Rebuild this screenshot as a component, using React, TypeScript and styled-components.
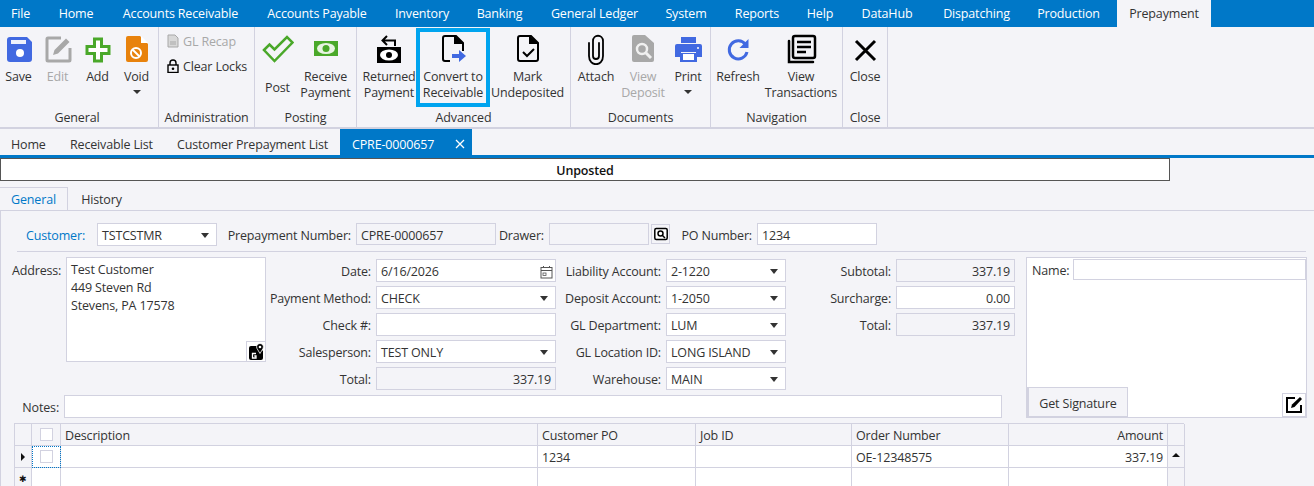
import * as React from "react";
import styled, { createGlobalStyle } from "styled-components";

const line = "#d2d2e0";
const panel = "#f4f4f8";
const ink = "#333";
const blue = "#0078c8";
const royal = "#4169e1";
const green = "#4aa82a";
const grey = "#a8a8a8";

const Global = createGlobalStyle`
  html, body { margin: 0; padding: 0; background: ${panel}; }
  body {
    width: 1314px;
    height: 486px;
    overflow: hidden;
    font-family: "Open Sans", "Noto Sans", sans-serif;
    font-size: 12.5px;
    letter-spacing: -0.16px;
    color: ${ink};
  }
`;

/* top menu */
const MenuBar = styled.div`
  display: flex;
  height: 27px;
  background: ${blue};
`;

const MenuItem = styled.div<{ $w: number; $active?: boolean }>`
  width: ${p => p.$w}px;
  margin-left: ${p => (p.$active ? 7 : 0)}px;
  line-height: 27px;
  text-align: center;
  white-space: nowrap;
  color: ${p => (p.$active ? ink : "#fff")};
  background: ${p => (p.$active ? panel : "transparent")};
`;

/* ribbon */
const Ribbon = styled.div`
  display: flex;
  height: 102px;
  box-sizing: border-box;
  border-bottom: 2px solid ${line};
`;

const Group = styled.div<{ $w: number }>`
  display: flex;
  flex-direction: column;
  width: ${p => p.$w}px;
  box-sizing: border-box;
  border-right: 1px solid ${line};
`;

const GroupBody = styled.div<{ $pad?: number }>`
  display: flex;
  height: 81px;
  padding-left: ${p => p.$pad ?? 0}px;
`;

const GroupLabel = styled.div<{ $shift?: number }>`
  height: 19px;
  padding-right: ${p => p.$shift ?? 0}px;
  line-height: 20px;
  text-align: center;
  white-space: nowrap;
`;

const RibbonButton = styled.div<{ $w: number; $off?: boolean; $boxed?: boolean }>`
  display: flex;
  flex-direction: column;
  align-items: center;
  flex: none;
  width: ${p => p.$w}px;
  box-sizing: border-box;
  height: ${p => (p.$boxed ? 79 : 81)}px;
  padding-top: ${p => (p.$boxed ? 5 : 6)}px;
  margin-top: ${p => (p.$boxed ? 1 : 0)}px;
  color: ${p => (p.$off ? grey : ink)};
  box-shadow: ${p => (p.$boxed ? "inset 0 0 0 4px #00a4ef" : "none")};
`;

const IconBox = styled.svg`
  display: block;
  flex: none;
  width: 32px;
  height: 32px;
`;

const ButtonText = styled.div<{ $low?: boolean }>`
  margin-top: ${p => (p.$low ? 15 : 4)}px;
  line-height: 16px;
  text-align: center;
  white-space: nowrap;
`;

const DropCaret = styled.div`
  width: 0;
  height: 0;
  margin-top: 5px;
  border-left: 4px solid transparent;
  border-right: 4px solid transparent;
  border-top: 4px solid ${ink};
`;

const SmallStack = styled.div`
  display: flex;
  flex-direction: column;
  gap: 7px;
  padding-top: 5px;
`;

const SmallButton = styled.div<{ $off?: boolean }>`
  display: flex;
  align-items: center;
  gap: 4px;
  height: 18px;
  white-space: nowrap;
  color: ${p => (p.$off ? grey : ink)};
`;

/* document tabs */
const DocTabs = styled.div`
  display: flex;
  height: 26px;
  background-color: ${panel};
  background-image: radial-gradient(#e6e6ec 0.6px, transparent 0.6px);
  background-size: 4px 4px;
`;

const DocTab = styled.div<{ $w: number; $pad: number; $active?: boolean }>`
  display: flex;
  align-items: center;
  justify-content: space-between;
  width: ${p => p.$w}px;
  box-sizing: border-box;
  padding: 4px 7px 0 ${p => p.$pad}px;
  white-space: nowrap;
  color: ${p => (p.$active ? "#fff" : ink)};
  background: ${p => (p.$active ? blue : "transparent")};
`;

const BlueRule = styled.div`
  height: 3px;
  background: ${blue};
`;

const StatusBar = styled.div`
  width: 1170px;
  height: 23px;
  box-sizing: border-box;
  border: 1px solid #555;
  background: #fff;
  color: #111;
  font-weight: 600;
  line-height: 23px;
  text-align: center;
`;

/* General / History */
const TabStrip = styled.div`
  display: flex;
  height: 24px;
  margin-top: 6px;
  box-sizing: border-box;
  border-bottom: 1px solid ${line};
`;

const FormTab = styled.div<{ $active?: boolean }>`
  width: 68px;
  height: 24px;
  box-sizing: border-box;
  line-height: 23px;
  text-align: center;
  color: ${p => (p.$active ? blue : ink)};
  border: 1px solid ${p => (p.$active ? line : "transparent")};
  border-bottom: 0;
  border-left: 0;
`;

const FormBody = styled.div`
  border-left: 1px solid ${line};
  height: 275px;
`;

const TopRow = styled.div`
  display: flex;
  align-items: center;
  height: 22px;
  padding: 12px 0 0 25px;
`;

const Label = styled.div<{ $w?: number; $link?: boolean; $left?: boolean }>`
  flex: none;
  width: ${p => (p.$w ? `${p.$w}px` : "auto")};
  box-sizing: border-box;
  padding: 2px 5px 0 0;
  text-align: ${p => (p.$left ? "left" : "right")};
  white-space: nowrap;
  color: ${p => (p.$link ? blue : ink)};
`;

const Input = styled.div<{ $w: number; $h?: number; $read?: boolean; $right?: boolean }>`
  display: flex;
  align-items: center;
  justify-content: ${p => (p.$right ? "flex-end" : "space-between")};
  flex: none;
  width: ${p => p.$w}px;
  height: ${p => p.$h ?? 23}px;
  box-sizing: border-box;
  padding: 2px 4px 0;
  border: 1px solid ${line};
  background: ${p => (p.$read ? panel : "#fff")};
  white-space: nowrap;
`;

const Caret = styled.span`
  flex: none;
  width: 0;
  height: 0;
  margin-right: 3px;
  border-left: 4px solid transparent;
  border-right: 4px solid transparent;
  border-top: 5px solid ${ink};
`;

const CalendarIcon = styled.svg`
  flex: none;
  margin-right: -2px;
`;

const LookupButton = styled.div`
  display: flex;
  align-items: center;
  justify-content: center;
  flex: none;
  width: 19px;
  height: 20px;
  margin-left: 2px;
  box-sizing: border-box;
  border: 1px solid ${line};
`;

const Rule = styled.div`
  height: 1px;
  margin: 6px 8px 5px 16px;
  background: ${line};
`;

const Section = styled.div`
  display: flex;
  height: 161px;
`;

const LeftStack = styled.div`
  display: flex;
  flex-direction: column;
  width: 1025px;
  flex: none;
`;

const Fields = styled.div`
  display: flex;
  height: 138px;
`;

const AddressBlock = styled.div`
  display: flex;
  width: 265px;
  flex: none;
  padding-left: 11px;
  box-sizing: border-box;
`;

const AddressLabel = styled.div`
  width: 54px;
  padding-top: 5px;
  white-space: nowrap;
`;

const AddressBox = styled.div`
  position: relative;
  width: 200px;
  height: 105px;
  box-sizing: border-box;
  padding: 3px 4px;
  border: 1px solid ${line};
  background: #fff;
  line-height: 18px;
`;

const MapButton = styled.div`
  position: absolute;
  right: 0;
  bottom: 0;
  display: flex;
  align-items: center;
  justify-content: center;
  width: 18px;
  height: 19px;
  border-left: 1px solid ${line};
  border-top: 1px solid ${line};
`;

const Column = styled.div<{ $w: number }>`
  display: flex;
  flex-direction: column;
  gap: 4px;
  flex: none;
  width: ${p => p.$w}px;
  padding-top: 2px;
`;

const FieldRow = styled.div`
  display: flex;
  align-items: center;
  justify-content: flex-end;
  height: 23px;
`;

const NotesRow = styled.div`
  display: flex;
  align-items: center;
  justify-content: flex-end;
  width: 1001px;
  height: 23px;
`;

const SignaturePanel = styled.div`
  display: flex;
  flex-direction: column;
  justify-content: space-between;
  width: 281px;
  height: 161px;
  box-sizing: border-box;
  border: 1px solid ${line};
  background: #fff;
`;

const NameRow = styled.div`
  display: flex;
  align-items: center;
  height: 22px;
  padding-left: 5px;
`;

const SignatureFoot = styled.div`
  display: flex;
  align-items: flex-end;
  justify-content: space-between;
`;

const SignatureButton = styled.div`
  width: 101px;
  height: 30px;
  box-sizing: border-box;
  border: 1px solid ${line};
  border-left-width: 2px;
  background: ${panel};
  line-height: 31px;
  text-align: center;
`;

const PenButton = styled.div`
  display: flex;
  align-items: center;
  justify-content: center;
  width: 24px;
  height: 24px;
  box-sizing: border-box;
  border: 1px solid ${line};
`;

/* lines table */
const Table = styled.div`
  display: grid;
  grid-template-columns: 17px 29px 477px 158px 156px 157px 159px 17px;
  grid-auto-rows: 22px;
  width: 1170px;
  margin: 5px 0 0 13px;
  box-sizing: border-box;
  border-top: 1px solid ${line};
  border-left: 1px solid ${line};
`;

const Cell = styled.div<{ $head?: boolean; $right?: boolean; $focus?: boolean }>`
  display: flex;
  align-items: center;
  justify-content: ${p => (p.$right ? "flex-end" : "flex-start")};
  box-sizing: border-box;
  padding: 2px 4px 0;
  border-right: 1px solid ${line};
  border-bottom: 1px solid ${line};
  background: ${p => (p.$head ? panel : "#fff")};
  white-space: nowrap;
  outline: ${p => (p.$focus ? `1px dotted ${blue}` : "none")};
  outline-offset: -1px;
`;

const CheckCell = styled(Cell)`
  justify-content: center;
  padding: 0;
`;

const MarkerCell = styled(Cell)`
  justify-content: center;
  padding: 0;
  font-size: 9px;
  color: #111;
`;

const Check = styled.span`
  width: 13px;
  height: 13px;
  box-sizing: border-box;
  border: 1px solid ${line};
  background: #fff;
`;

const RowArrow = styled.span`
  width: 0;
  height: 0;
  border-top: 4px solid transparent;
  border-bottom: 4px solid transparent;
  border-left: 4px solid #111;
`;

const ScrollUp = styled.span`
  width: 0;
  height: 0;
  margin-bottom: 4px;
  border-left: 4px solid transparent;
  border-right: 4px solid transparent;
  border-bottom: 4px solid #111;
`;

const docPath = "M8 3h11l7 7v16a2 2 0 0 1-2 2H8a2 2 0 0 1-2-2V5a2 2 0 0 1 2-2z";

const icons: Record<string, React.ReactNode> = {
  save: (
    <>
      <path d="M7 4h17l5 5v17a3 3 0 0 1-3 3H7a3 3 0 0 1-3-3V7a3 3 0 0 1 3-3z" fill={royal} />
      <rect x="8" y="7" width="15" height="4" fill="#eef1fc" />
      <circle cx="17" cy="20" r="4" fill="#fff" />
    </>
  ),
  edit: (
    <>
      <path d="M19 5H6a1 1 0 0 0-1 1v21a1 1 0 0 0 1 1h21a1 1 0 0 0 1-1V15" fill="none" stroke={grey} strokeWidth="3" />
      <path d="M11 22l1.500-5L24 5.500l3.500 3.500L16 20.500z" fill={grey} />
    </>
  ),
  add: (
    <path d="M12.500 6h7v7.500H27v7h-7.500V28h-7v-7.500H5v-7h7.500z" fill="#fff" stroke={green} strokeWidth="3" />
  ),
  void: (
    <>
      <path d="M7 3h12l8 8v16a2 2 0 0 1-2 2H7a2 2 0 0 1-2-2V5a2 2 0 0 1 2-2z" fill="#e8820c" />
      <path d="M20 3l7 7h-7z" fill="#fff" />
      <circle cx="15" cy="20" r="5" fill="none" stroke="#fff" strokeWidth="2" />
      <path d="M11.500 16.500l7 7" stroke="#fff" strokeWidth="2" />
    </>
  ),
  post: (
    <path d="M2 17l5.500-5.500 5 5L25 4l5.500 5.500L12.500 28z" fill={panel} stroke={green} strokeWidth="2.500" />
  ),
  receive: (
    <>
      <rect x="4" y="8" width="24" height="15" fill={green} />
      <ellipse cx="16" cy="15.500" rx="9" ry="5.500" fill="#e8f4e2" />
      <circle cx="16" cy="15.500" r="3.500" fill={green} />
    </>
  ),
  returned: (
    <>
      <rect x="4" y="14" width="24" height="16" fill="#000" />
      <ellipse cx="16" cy="22" rx="9" ry="5.500" fill="#fff" />
      <circle cx="16" cy="22" r="3" fill="#000" />
      <path d="M22 13V7.500H10M14 3L9.500 7.500 14 12" fill="none" stroke="#000" strokeWidth="2" />
    </>
  ),
  convert: (
    <>
      <path d="M13 28H8a2 2 0 0 1-2-2V5a2 2 0 0 1 2-2h11l7 7v8" fill="none" stroke="#000" strokeWidth="2" />
      <path d="M18 3v7h8" fill="#000" stroke="#000" strokeWidth="2" />
      <path d="M15 21h7v-4l7 6-7 6v-4h-7z" fill={royal} />
    </>
  ),
  mark: (
    <>
      <path d={docPath} fill="none" stroke="#000" strokeWidth="2" />
      <path d="M18 3v7h8" fill="#000" stroke="#000" strokeWidth="2" />
      <path d="M11 19l4 4 7-7" fill="none" stroke="#000" strokeWidth="2" />
    </>
  ),
  attach: (
    <path d="M9 10v13c0 11 14 11 14 0V8c0-7-10-7-10 0v15c0 4 6 4 6 0V10" fill="none" stroke="#000" strokeWidth="1.800" strokeLinecap="round" />
  ),
  deposit: (
    <>
      <path d="M7 2h11l9 8v17a2 2 0 0 1-2 2H7a2 2 0 0 1-2-2V4a2 2 0 0 1 2-2z" fill={grey} />
      <circle cx="15" cy="16" r="5" fill="none" stroke="#f0f0f0" strokeWidth="2.500" />
      <path d="M19 20l5 5" stroke="#f0f0f0" strokeWidth="3" />
    </>
  ),
  print: (
    <>
      <rect x="9" y="4" width="15" height="6" fill={royal} />
      <path d="M5 11h23a2 2 0 0 1 2 2v11h-6v-5H9v5H3V13a2 2 0 0 1 2-2z" fill={royal} />
      <path d="M8 20h17v9H8z" fill={royal} />
      <rect x="11" y="21" width="11" height="6" fill="#fff" />
      <circle cx="26" cy="15" r="1" fill="#fff" />
    </>
  ),
  refresh: (
    <>
      <path d="M23.500 11.500a9 9 0 1 0 1.500 7.500" fill="none" stroke={royal} strokeWidth="3" />
      <path d="M26.500 6v9h-9z" fill={royal} />
    </>
  ),
  transactions: (
    <>
      <path d="M4 8v21h24" fill="none" stroke="#000" strokeWidth="2.500" strokeLinecap="round" />
      <rect x="8" y="3" width="22" height="22" rx="2" fill={panel} stroke="#000" strokeWidth="2.500" />
      <path d="M12 9h14M12 14h14M12 19h9" stroke="#000" strokeWidth="2.500" />
    </>
  ),
  close: <path d="M7 8l19 19M26 8L7 27" stroke="#000" strokeWidth="3" fill="none" />,
};

function Icon({ name }: { name: string }) {
  return <IconBox viewBox="0 0 32 32">{icons[name]}</IconBox>;
}

const menuItems: [string, number][] = [
  ["File", 41],
  ["Home", 70],
  ["Accounts Receivable", 139],
  ["Accounts Payable", 134],
  ["Inventory", 76],
  ["Banking", 79],
  ["General Ledger", 111],
  ["System", 72],
  ["Reports", 70],
  ["Help", 56],
  ["DataHub", 78],
  ["Dispatching", 101],
  ["Production", 83],
];

function Tool({
  icon,
  w,
  text,
  off,
  low,
  boxed,
  caret,
}: {
  icon: string;
  w: number;
  text: string[];
  off?: boolean;
  low?: boolean;
  boxed?: boolean;
  caret?: boolean;
}) {
  return (
    <RibbonButton $w={w} $off={off} $boxed={boxed}>
      <Icon name={icon} />
      <ButtonText $low={low}>
        {text.map(t => (
          <div key={t}>{t}</div>
        ))}
      </ButtonText>
      {caret && <DropCaret />}
    </RibbonButton>
  );
}

function Combo({ w, value }: { w: number; value: string }) {
  return (
    <Input $w={w}>
      {value}
      <Caret />
    </Input>
  );
}

export default function App() {
  return (
    <>
      <Global />
      <MenuBar>
        {menuItems.map(([name, w]) => (
          <MenuItem key={name} $w={w}>
            {name}
          </MenuItem>
        ))}
        <MenuItem $w={94} $active>
          Prepayment
        </MenuItem>
      </MenuBar>

      <Ribbon>
        <Group $w={159}>
          <GroupBody>
            <Tool icon="save" w={37} text={["Save"]} />
            <Tool icon="edit" w={41} text={["Edit"]} off />
            <Tool icon="add" w={39} text={["Add"]} />
            <Tool icon="void" w={39} text={["Void"]} caret />
          </GroupBody>
          <GroupLabel $shift={4}>General</GroupLabel>
        </Group>
        <Group $w={96}>
          <GroupBody $pad={8}>
            <SmallStack>
              <SmallButton $off>
                <svg width="12" height="14" viewBox="0 0 12 14">
                  <path d="M1 1h7l3 3v9H1z" fill="#d8d8d8" stroke={grey} />
                  <path d="M4 7v4M6 7v4M8 7v4" stroke={grey} />
                </svg>
                GL Recap
              </SmallButton>
              <SmallButton>
                <svg width="12" height="14" viewBox="0 0 12 14">
                  <path d="M3 6V4a3 3 0 0 1 6 0v2" fill="none" stroke="#000" strokeWidth="1.400" />
                  <rect x="1" y="6" width="10" height="7.500" fill="none" stroke="#000" strokeWidth="1.400" />
                  <circle cx="6" cy="9.800" r="1.300" fill="#000" />
                </svg>
                Clear Locks
              </SmallButton>
            </SmallStack>
          </GroupBody>
          <GroupLabel>Administration</GroupLabel>
        </Group>
        <Group $w={102}>
          <GroupBody>
            <Tool icon="post" w={45} text={["Post"]} low />
            <Tool icon="receive" w={51} text={["Receive", "Payment"]} />
          </GroupBody>
          <GroupLabel>Posting</GroupLabel>
        </Group>
        <Group $w={214}>
          <GroupBody $pad={5}>
            <Tool icon="returned" w={54} text={["Returned", "Payment"]} />
            <Tool icon="convert" w={74} text={["Convert to", "Receivable"]} boxed />
            <Tool icon="mark" w={75} text={["Mark", "Undeposited"]} />
          </GroupBody>
          <GroupLabel>Advanced</GroupLabel>
        </Group>
        <Group $w={140}>
          <GroupBody $pad={1}>
            <Tool icon="attach" w={48} text={["Attach"]} />
            <Tool icon="deposit" w={46} text={["View", "Deposit"]} off />
            <Tool icon="print" w={44} text={["Print"]} caret />
          </GroupBody>
          <GroupLabel>Documents</GroupLabel>
        </Group>
        <Group $w={132}>
          <GroupBody $pad={4}>
            <Tool icon="refresh" w={46} text={["Refresh"]} />
            <Tool icon="transactions" w={80} text={["View", "Transactions"]} />
          </GroupBody>
          <GroupLabel>Navigation</GroupLabel>
        </Group>
        <Group $w={45}>
          <GroupBody>
            <Tool icon="close" w={44} text={["Close"]} />
          </GroupBody>
          <GroupLabel>Close</GroupLabel>
        </Group>
      </Ribbon>

      <DocTabs>
        <DocTab $w={58} $pad={11}>Home</DocTab>
        <DocTab $w={108} $pad={12}>Receivable List</DocTab>
        <DocTab $w={174} $pad={11}>Customer Prepayment List</DocTab>
        <DocTab $w={132} $pad={12} $active>
          CPRE-0000657
          <svg width="10" height="10" viewBox="0 0 10 10">
            <path d="M1 1l8 8M9 1l-8 8" stroke="#fff" strokeWidth="1.300" />
          </svg>
        </DocTab>
      </DocTabs>
      <BlueRule />

      <StatusBar>Unposted</StatusBar>

      <TabStrip>
        <FormTab $active>General</FormTab>
        <FormTab>History</FormTab>
      </TabStrip>

      <FormBody>
        <TopRow>
          <Label $w={71} $link $left>Customer:</Label>
          <Combo w={120} value="TSTCSTMR" />
          <Label $w={139}>Prepayment Number:</Label>
          <Input $w={140} $h={22} $read>CPRE-0000657</Input>
          <Label $w={53}>Drawer:</Label>
          <Input $w={100} $h={22} $read />
          <LookupButton>
            <svg width="14" height="14" viewBox="0 0 14 14">
              <rect x="0.800" y="1.500" width="12.400" height="11" rx="1.500" fill="#fff" stroke="#000" strokeWidth="1.500" />
              <circle cx="6.500" cy="6.500" r="2.500" fill="none" stroke="#000" strokeWidth="1.500" />
              <path d="M8.500 8.500l2.500 2.500" stroke="#000" strokeWidth="1.500" />
            </svg>
          </LookupButton>
          <Label $w={87}>PO Number:</Label>
          <Input $w={120} $h={22}>1234</Input>
        </TopRow>
        <Rule />
        <Section>
          <LeftStack>
            <Fields>
              <AddressBlock>
                <AddressLabel>Address:</AddressLabel>
                <AddressBox>
                  Test Customer
                  <br />
                  449 Steven Rd
                  <br />
                  Stevens, PA 17578
                  <MapButton>
                    <svg width="17" height="18" viewBox="0 0 17 18">
                      <path d="M1 5a2 2 0 0 1 2-2h7l5 5v7a2 2 0 0 1-2 2H3a2 2 0 0 1-2-2z" fill="#000" />
                      <path d="M12 10.500L9 5.500a3.400 3.400 0 1 1 6 0z" fill="#000" stroke="#fff" strokeWidth="0.800" />
                      <circle cx="12" cy="4" r="1.300" fill="#fff" />
                      <path d="M8 10.500H4.500v4.500H8v-2H6.300" fill="none" stroke="#fff" strokeWidth="1.300" />
                    </svg>
                  </MapButton>
                </AddressBox>
              </AddressBlock>
              <Column $w={290}>
                <FieldRow>
                  <Label>Date:</Label>
                  <Input $w={180}>
                    6/16/2026
                    <CalendarIcon width="13" height="14" viewBox="0 0 13 14">
                      <rect x="1" y="2.500" width="11" height="10.500" fill="none" stroke="#555" />
                      <path d="M1 5.500h11M3.500 1v2M9.500 1v2" stroke="#555" />
                      <rect x="3" y="8" width="3" height="2.500" fill="none" stroke="#555" strokeWidth="0.800" />
                    </CalendarIcon>
                  </Input>
                </FieldRow>
                <FieldRow>
                  <Label>Payment Method:</Label>
                  <Combo w={180} value="CHECK" />
                </FieldRow>
                <FieldRow>
                  <Label>Check #:</Label>
                  <Input $w={180} />
                </FieldRow>
                <FieldRow>
                  <Label>Salesperson:</Label>
                  <Combo w={180} value="TEST ONLY" />
                </FieldRow>
                <FieldRow>
                  <Label>Total:</Label>
                  <Input $w={180} $read $right>337.19</Input>
                </FieldRow>
              </Column>
              <Column $w={230}>
                <FieldRow>
                  <Label>Liability Account:</Label>
                  <Combo w={120} value="2-1220" />
                </FieldRow>
                <FieldRow>
                  <Label>Deposit Account:</Label>
                  <Combo w={120} value="1-2050" />
                </FieldRow>
                <FieldRow>
                  <Label>GL Department:</Label>
                  <Combo w={120} value="LUM" />
                </FieldRow>
                <FieldRow>
                  <Label>GL Location ID:</Label>
                  <Combo w={120} value="LONG ISLAND" />
                </FieldRow>
                <FieldRow>
                  <Label>Warehouse:</Label>
                  <Combo w={120} value="MAIN" />
                </FieldRow>
              </Column>
              <Column $w={229}>
                <FieldRow>
                  <Label>Subtotal:</Label>
                  <Input $w={119} $read $right>337.19</Input>
                </FieldRow>
                <FieldRow>
                  <Label>Surcharge:</Label>
                  <Input $w={119} $right>0.00</Input>
                </FieldRow>
                <FieldRow>
                  <Label>Total:</Label>
                  <Input $w={119} $read $right>337.19</Input>
                </FieldRow>
              </Column>
            </Fields>
            <NotesRow>
              <Label>Notes:</Label>
              <Input $w={938} />
            </NotesRow>
          </LeftStack>
          <SignaturePanel>
            <NameRow>
              <Label $w={41} $left>Name:</Label>
              <Input $w={233} $h={21} />
            </NameRow>
            <SignatureFoot>
              <SignatureButton>Get Signature</SignatureButton>
              <PenButton>
                <svg width="20" height="20" viewBox="0 0 20 20">
                  <path d="M11 3H3v14h14v-7" fill="none" stroke="#000" strokeWidth="2" />
                  <path d="M7 13l1-3.500L16 2l2 2-7.500 8z" fill="#000" />
                </svg>
              </PenButton>
            </SignatureFoot>
          </SignaturePanel>
        </Section>

        <Table>
          <Cell $head />
          <CheckCell $head><Check /></CheckCell>
          <Cell $head>Description</Cell>
          <Cell $head>Customer PO</Cell>
          <Cell $head>Job ID</Cell>
          <Cell $head>Order Number</Cell>
          <Cell $head $right>Amount</Cell>
          <Cell $head />

          <MarkerCell $head><RowArrow /></MarkerCell>
          <CheckCell $focus><Check /></CheckCell>
          <Cell />
          <Cell>1234</Cell>
          <Cell />
          <Cell>OE-12348575</Cell>
          <Cell $right>337.19</Cell>
          <MarkerCell $head><ScrollUp /></MarkerCell>

          <MarkerCell $head>✱</MarkerCell>
          <Cell />
          <Cell />
          <Cell />
          <Cell />
          <Cell />
          <Cell />
          <Cell $head />
        </Table>
      </FormBody>
    </>
  );
}
